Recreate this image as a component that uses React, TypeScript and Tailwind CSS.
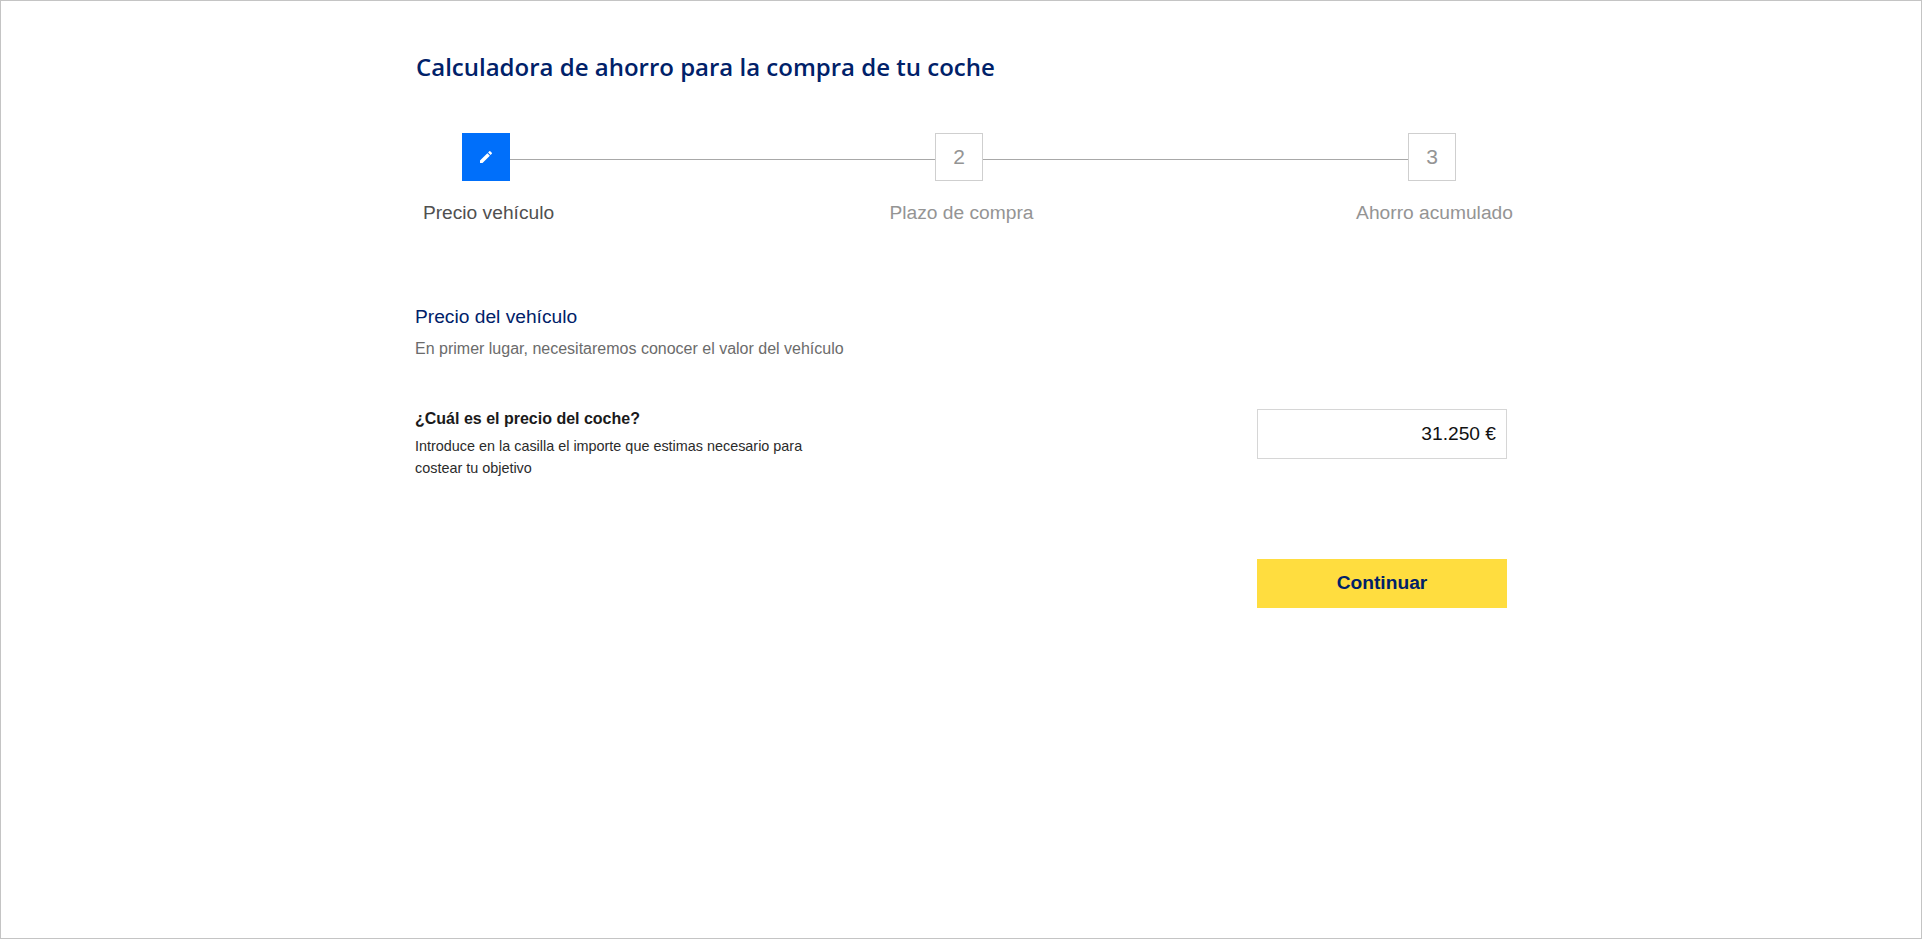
const Pencil = () => (
  <svg viewBox="0 0 24 24" width="16" height="16" fill="#ffffff" aria-hidden="true">
    <path d="M3 17.25V21h3.75L17.81 9.94l-3.75-3.75L3 17.25zM20.71 7.04a1 1 0 0 0 0-1.41l-2.34-2.34a1 1 0 0 0-1.41 0l-1.83 1.83 3.75 3.75 1.83-1.83z" />
  </svg>
);

function Step({ n, label, active }: { n?: string; label: string; active?: boolean }) {
  return (
    <div className="flex w-12 shrink-0 flex-col items-center">
      <div
        className={
          active
            ? "flex h-12 w-12 items-center justify-center bg-[#006ffa]"
            : "flex h-12 w-12 items-center justify-center border border-[#cfcfcf] text-[21px] text-[#949494]"
        }
      >
        {active ? <Pencil /> : n}
      </div>
      <span className={active ? "mt-[21px] ml-[5px] whitespace-nowrap text-[19.2px] leading-[22px] text-[#505050]" : "mt-[21px] ml-[5px] whitespace-nowrap text-[19.2px] leading-[22px] text-[#949494]"}>
        {label}
      </span>
    </div>
  );
}

const Line = () => <div className="mt-[26px] h-px flex-1 bg-[#a8a8a8]" />;

export default function App() {
  return (
    <div className="h-[939px] border border-[#c4c4c4] bg-white font-['Liberation_Sans',Arial,sans-serif]">
      <div className="ml-[414px] w-[1092px] pt-[50px]">
        <h1 className="ml-px font-['Open_Sans',sans-serif] text-[24px] font-semibold leading-[32px] text-[#002169]">
          Calculadora de ahorro para la compra de tu coche
        </h1>
        <div className="mt-[50px] ml-[47px] mr-[51px] flex items-start">
          <Step active label="Precio vehículo" />
          <Line />
          <Step n="2" label="Plazo de compra" />
          <Line />
          <Step n="3" label="Ahorro acumulado" />
        </div>
        <h2 className="mt-[81px] text-[19.2px] leading-[24px] text-[#002169]">Precio del vehículo</h2>
        <p className="mt-[9px] text-[16px] leading-[22px] text-[#6b6b6b]">
          En primer lugar, necesitaremos conocer el valor del vehículo
        </p>
        <div className="mt-[49px] flex items-start justify-between">
          <div className="w-[400px]">
            <div className="text-[16px] font-bold leading-[20px] text-[#1a1a1a]">¿Cuál es el precio del coche?</div>
            <p className="mt-[6px] text-[14.4px] leading-[22px] text-[#2b2b2b]">
              Introduce en la casilla el importe que estimas necesario para costear tu objetivo
            </p>
          </div>
          <div className="flex h-[50px] w-[250px] items-center justify-end border border-[#d6d6d6] pr-[10px] text-[19.2px] text-[#111111]">
            31.250 €
          </div>
        </div>
        <div className="mt-[80px] flex justify-end">
          <button className="h-[49px] w-[250px] bg-[#ffdd3f] text-[19.2px] font-bold text-[#002169]">Continuar</button>
        </div>
      </div>
    </div>
  );
}
